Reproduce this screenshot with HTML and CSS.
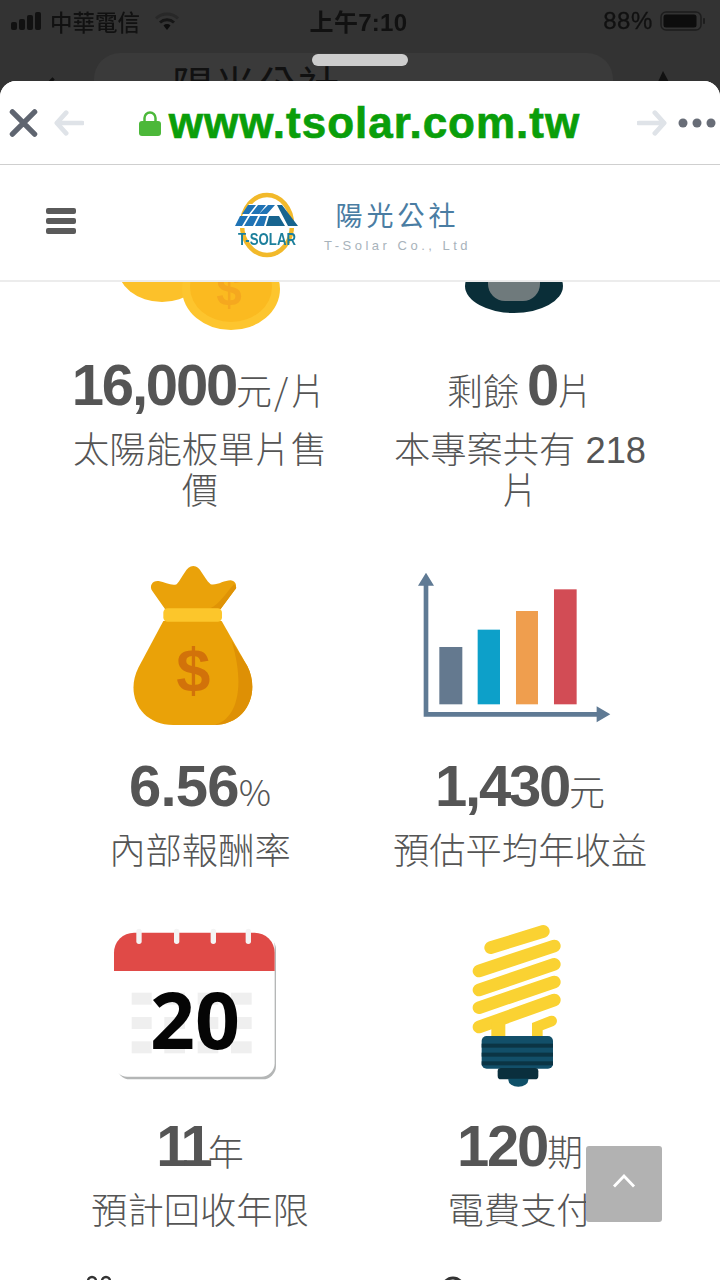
FILE: index.html
```html
<!DOCTYPE html>
<html lang="zh-Hant">
<head>
<meta charset="utf-8">
<title>陽光公社</title>
<link rel="stylesheet" href="styles.css">
</head>
<body>
<div class="phone">
  <header class="backdrop">
    <div class="status">
      <div class="status-left">
        <svg class="signal" viewBox="0 0 30 18"><rect x="0" y="10" width="6" height="8" rx="2"/><rect x="8" y="7" width="6" height="11" rx="2"/><rect x="16" y="3" width="6" height="15" rx="2"/><rect x="24" y="0" width="6" height="18" rx="2"/></svg>
        <span>中華電信</span>
        <svg class="wifi" viewBox="0 0 24 18"><path d="M1 6.500a16 16 0 0 1 22 0" fill="none" stroke="#282828" stroke-width="3"/><path d="M5 10.500a10.500 10.500 0 0 1 14 0" fill="none" stroke="#161616" stroke-width="3"/><path d="M8.500 13.500a5 5 0 0 1 7 0L12 18z" fill="#0d0d0d"/></svg>
      </div>
      <div class="status-time">上午7:10</div>
      <div class="status-right">
        <span>88%</span>
        <svg class="battery" viewBox="0 0 46 20"><rect x="1" y="1" width="40" height="18" rx="5" fill="none" stroke="#1d1d1d" stroke-width="1.500"/><rect x="3.500" y="3.500" width="33" height="13" rx="2.500" fill="#0d0d0d"/><rect x="43" y="7" width="2" height="6" rx="1" fill="#1d1d1d"/></svg>
      </div>
    </div>
    <div class="behind">
      <svg class="behind-arrow" viewBox="0 0 20 30"><path d="M17 3 5 15l12 12" fill="none" stroke="#111" stroke-width="4"/></svg>
      <div class="behind-pill"><span class="behind-lens"></span><span class="behind-title">陽光公社</span></div>
      <svg class="behind-share" viewBox="0 0 30 30"><path d="M2 30 14 4l14 26z" fill="#111"/></svg>
    </div>
  </header>
  <div class="handle"></div>

  <section class="sheet">
    <div class="addressbar">
      <div class="addr-side">
        <svg class="close" viewBox="0 0 30 30"><path d="M3.500 3.500l23 23M26.500 3.500l-23 23" stroke="#5f6570" stroke-width="5.500" stroke-linecap="round"/></svg>
        <svg class="arrow" viewBox="0 0 32 28"><path d="M13 3 3 14l10 11M3 14h27" fill="none" stroke="#dfe3e8" stroke-width="5" stroke-linecap="round" stroke-linejoin="round"/></svg>
      </div>
      <div class="url">
        <svg class="lock" viewBox="0 0 22 26"><path d="M5.500 12V8a5.500 5.500 0 0 1 11 0v4" fill="none" stroke="#4cb83a" stroke-width="2.500"/><rect y="11" width="22" height="15" rx="3" fill="#4cb83a"/></svg>
        <span>www.tsolar.com.tw</span>
      </div>
      <div class="addr-side addr-right">
        <svg class="arrow" viewBox="0 0 32 28"><path d="M19 3l10 11-10 11M29 14H2" fill="none" stroke="#dfe3e8" stroke-width="5" stroke-linecap="round" stroke-linejoin="round"/></svg>
        <svg class="dots" viewBox="0 0 38 10"><circle cx="5" cy="5" r="4.500" fill="#686d77"/><circle cx="19" cy="5" r="4.500" fill="#686d77"/><circle cx="33" cy="5" r="4.500" fill="#686d77"/></svg>
      </div>
    </div>

    <nav class="sitenav">
      <div class="burger"><i></i><i></i><i></i></div>
      <div class="logo">
        <svg class="logo-mark" viewBox="0 0 66 66">
          <ellipse cx="33" cy="33" rx="25" ry="30" fill="none" stroke="#f2b92a" stroke-width="4.500"/>
          <path d="M15 12h32l17 24H1z" fill="#fff"/>
          <path d="M14 13h8l-7 9H8zM24 13h8l-7 9h-8zM34 13h7l-8 9h-8zM6 24h8l-6 10H1zM16 24h8l-5 10h-9zM26 24h7l-3 10h-9z" fill="#1f73b5"/>
          <path d="M43 13h5l16 21H54z M35 24h10l6 10H32z" fill="#17648f"/>
          <text class="logo-mark-text" x="33" y="53" text-anchor="middle" textLength="58" lengthAdjust="spacingAndGlyphs">T-SOLAR</text>
        </svg>
        <div class="logo-text">
          <div class="logo-zh">陽光公社</div>
          <div class="logo-en">T-Solar Co., Ltd</div>
        </div>
      </div>
    </nav>

    <main class="viewport">
      <div class="stats">
        <article class="stat">
          <svg class="stat-icon" viewBox="0 0 320 190">
            <ellipse cx="122" cy="106" rx="45" ry="36" fill="#fcc12a"/>
            <ellipse cx="191" cy="129" rx="49" ry="41" fill="#fdc52e"/>
            <ellipse cx="191" cy="127" rx="41" ry="35" fill="#fbba20"/>
            <text class="coin-sign" x="189" y="146" text-anchor="middle">$</text>
          </svg>
          <div class="value"><b>16,000</b><span class="wide">元/片</span></div>
          <div class="label">太陽能板單片售價</div>
        </article>
        <article class="stat">
          <svg class="stat-icon" viewBox="0 0 320 190">
            <ellipse cx="154" cy="126" rx="49" ry="27" fill="#0a2e38"/>
            <rect x="128" y="100" width="52" height="41" rx="17" fill="#6f7a7c"/>
          </svg>
          <div class="value"><span>剩餘 </span><b>0</b><span>片</span></div>
          <div class="label">本專案共有 218片</div>
        </article>
        <article class="stat">
          <svg class="stat-icon" viewBox="0 0 320 190">
            <g transform="translate(60 -10) scale(.3333)">
              <path d="M280 45C302 45 308 78 332 100 352 104 372 88 392 88 408 90 414 106 402 120L362 174H195L157 120C146 104 158 88 176 90 196 93 214 106 230 100 250 78 258 45 280 45Z" fill="#eaa20a"/>
              <path d="M330 172C360 160 378 125 402 100 412 110 410 112 402 120L362 174Z" fill="#df9306"/>
              <path d="M190 210H365L442 345C482 425 440 522 340 522H220C120 522 75 430 115 350Z" fill="#eaa208"/>
              <path d="M395 270 442 345C482 425 440 522 340 522 405 510 440 420 395 270Z" fill="#de9005"/>
              <rect x="190" y="172" width="176" height="40" rx="13" fill="#fcc62b"/>
              <text class="bag-sign" x="280" y="419" text-anchor="middle">$</text>
            </g>
          </svg>
          <div class="value"><b class="loose">6.56</b><span>%</span></div>
          <div class="label">內部報酬率</div>
        </article>
        <article class="stat">
          <svg class="stat-icon" viewBox="0 0 320 190">
            <g transform="translate(40 0) scale(.3333)">
              <path d="M78 60V460H600" fill="none" stroke="#5f7a94" stroke-width="14"/>
              <path d="M78 35 102 74H54zM631 460 590 436V484z" fill="#5f7a94"/>
              <rect x="118" y="258" width="69" height="172" fill="#64798f"/>
              <rect x="233" y="206" width="67" height="224" fill="#0da0c9"/>
              <rect x="348" y="150" width="66" height="280" fill="#ef9e4e"/>
              <rect x="462" y="85" width="68" height="345" fill="#d24c55"/>
            </g>
          </svg>
          <div class="value"><b>1,430</b><span>元</span></div>
          <div class="label">預估平均年收益</div>
        </article>
        <article class="stat">
          <svg class="stat-icon" viewBox="0 0 320 190">
            <g transform="translate(60 -5) scale(.3333)">
              <rect x="50" y="60" width="478" height="430" rx="40" fill="#b4b6b6"/>
              <rect x="42" y="50" width="482" height="432" rx="40" fill="#fff"/>
              <path d="M42 165V110a60 60 0 0 1 60-60H464a60 60 0 0 1 60 60V165Z" fill="#e04a47"/>
              <g fill="#f4f4f4"><rect x="109" y="38" width="16" height="46" rx="8"/><rect x="222" y="38" width="16" height="46" rx="8"/><rect x="332" y="38" width="16" height="46" rx="8"/><rect x="437" y="38" width="16" height="46" rx="8"/></g>
              <g fill="#efefef"><rect x="95" y="230" width="360" height="36"/><rect x="95" y="303" width="360" height="36"/><rect x="95" y="376" width="360" height="36"/></g>
              <g fill="#fff"><rect x="155" y="225" width="38" height="190"/><rect x="255" y="225" width="38" height="190"/><rect x="355" y="225" width="38" height="190"/></g>
              <text class="cal-num" x="285" y="398" text-anchor="middle">20</text>
            </g>
          </svg>
          <div class="value"><b class="tight">11</b><span>年</span></div>
          <div class="label">預計回收年限</div>
        </article>
        <article class="stat">
          <svg class="stat-icon" viewBox="0 0 320 190">
            <g transform="translate(90 -5) scale(.3333)">
              <g fill="none" stroke="#fad232" stroke-width="38" stroke-linecap="round">
                <path d="M122 95 280 46M87 165 313 90M87 222 313 145M87 275 313 198M87 333 313 252"/>
                <path d="M262 360V332L305 315" stroke-width="32"/>
              </g>
              <rect x="124" y="320" width="42" height="50" fill="#fad232"/>
              <rect x="95" y="360" width="214" height="98" rx="15" fill="#124f69"/>
              <g fill="#0b3444"><rect x="95" y="383" width="214" height="12"/><rect x="95" y="410" width="214" height="12"/><rect x="95" y="436" width="214" height="12"/></g>
              <rect x="143" y="456" width="122" height="34" rx="10" fill="#0a2f3d"/>
              <path d="M175 488H235V492A30 20 0 0 1 175 492Z" fill="#0f5068"/>
            </g>
          </svg>
          <div class="value"><b>120</b><span>期</span></div>
          <div class="label">電費支付</div>
        </article>
        <article class="stat">
          <svg class="stat-icon stat-peek" viewBox="0 0 320 190">
            <circle cx="52" cy="5" r="4" fill="none" stroke="#333" stroke-width="2.500"/>
            <circle cx="66" cy="5" r="4" fill="none" stroke="#333" stroke-width="2.500"/>
          </svg>
        </article>
        <article class="stat">
          <svg class="stat-icon stat-peek" viewBox="0 0 320 190">
            <circle cx="93" cy="12" r="10" fill="none" stroke="#333" stroke-width="3"/>
          </svg>
        </article>
      </div>
    </main>
  </section>

  <button class="totop" type="button" aria-label="top">
    <svg viewBox="0 0 24 14"><path d="M2 12.500 12 2l10 10.500" fill="none" stroke="#fff" stroke-width="2.800"/></svg>
  </button>
</div>
</body>
</html>
```
FILE: styles.css
```css
* { box-sizing: border-box; }
html, body { margin: 0; padding: 0; background: #fff; }
body { font-family: "Liberation Sans", "Noto Sans CJK TC", sans-serif; }
.phone { position: relative; width: 720px; height: 1280px; overflow: hidden; background: #333; }

.backdrop { height: 81px; overflow: hidden; color: #111; }
.status { height: 41px; padding: 0 14px 0 11px; display: grid; grid-template-columns: 1fr auto 1fr; align-items: center; font-size: 23px; filter: blur(.4px); }
.status-left { display: flex; align-items: center; gap: 9px; }
.status-left span { font-family: "Noto Sans CJK TC", sans-serif; font-size: 22.5px; font-weight: 500; }
.signal { width: 30px; height: 18px; fill: #111; }
.wifi { width: 24px; height: 18px; margin-left: 6px; }
.status-time { font-family: "Liberation Sans", "Noto Sans CJK TC", sans-serif; font-size: 24px; font-weight: 700; letter-spacing: .3px; }
.status-right { display: flex; justify-content: flex-end; align-items: center; gap: 7px; }
.status-right span { font-size: 24px; letter-spacing: .6px; -webkit-text-stroke: .3px #111; }
.battery { width: 46px; height: 20px; }

.behind { height: 50px; margin-top: 12px; padding: 0 40px; display: flex; align-items: flex-start; gap: 38px; }
.behind-arrow { width: 16px; height: 30px; margin-top: 20px; flex: none; }
.behind-pill { width: 519px; height: 60px; flex: none; background: #3a3a3a; border-radius: 26px; padding: 6px 0 0 24px; display: flex; align-items: flex-start; gap: 32px; }
.behind-lens { width: 22px; height: 22px; border: 2px solid #666; border-radius: 50%; margin-top: 22px; }
.behind-title { font-family: "Noto Sans CJK TC", sans-serif; font-size: 42px; line-height: 50px; color: #111; }
.behind-share { width: 30px; height: 30px; margin: 14px 0 0 -2px; flex: none; }

.handle { position: absolute; left: 312px; top: 54px; width: 96px; height: 12px; border-radius: 6px; background: #cdcdcd; }

.sheet { height: 1199px; background: #fff; border-radius: 16px 16px 0 0; overflow: hidden; }

.addressbar { height: 84px; border-bottom: 1px solid #cfcfcf; display: flex; align-items: center; padding: 0 4px 0 9px; position: relative; z-index: 3; background: #fff; }
.addr-side { width: 127px; flex: none; display: flex; align-items: center; gap: 16px; }
.addr-right { width: 133px; justify-content: flex-end; gap: 11px; }
.close { width: 29px; height: 30px; }
.arrow { width: 30px; height: 28px; }
.dots { width: 38px; height: 10px; }
.url { flex: 1; display: flex; justify-content: center; align-items: center; gap: 8px; min-width: 0; }
.lock { width: 22px; height: 26px; flex: none; }
.url span { color: #0a9e0a; font-size: 44px; font-weight: 700; line-height: 60px; letter-spacing: 1px; white-space: nowrap; -webkit-text-stroke: .7px #0a9e0a; }

.sitenav { height: 117px; padding: 0 0 0 46px; display: flex; align-items: center; gap: 158px; background: #fff; border-bottom: 2px solid #ececec; position: relative; z-index: 2; }
.burger { width: 30px; display: flex; flex-direction: column; gap: 4px; margin-top: -4px; }
.burger i { display: block; height: 6px; border-radius: 2px; background: #5a5a5a; }
.logo { display: flex; align-items: center; gap: 24px; margin-top: 4px; }
.logo-mark { width: 66px; height: 66px; filter: blur(.5px); }
.logo-mark-text { font-family: "Liberation Sans", sans-serif; font-weight: 700; font-size: 17px; fill: #1c7f9c; }
.logo-text { text-align: center; margin-top: 4px; }
.logo-zh { font-family: "Noto Sans CJK TC", sans-serif; font-size: 27px; line-height: 34px; letter-spacing: 4px; color: #4a7da3; }
.logo-en { font-size: 13px; line-height: 20px; letter-spacing: 3.5px; color: #a8b3bb; white-space: nowrap; margin-top: 4px; }

.viewport { height: 998px; overflow: hidden; background: #fff; }
.stats { margin-top: -122px; padding: 0 40px; display: grid; grid-template-columns: 320px 320px; }
.stat { padding-bottom: 49px; text-align: center; color: #555; }
.stat-icon { display: block; width: 320px; height: 190px; filter: blur(.5px); overflow: visible; }
.stat-peek { margin-top: -5px; }
.value { height: 70px; line-height: 70px; white-space: nowrap; font-family: "Noto Sans CJK TC", sans-serif; font-size: 36px; font-weight: 300; }
.value b { font-family: "Liberation Sans", sans-serif; font-size: 58px; font-weight: 700; letter-spacing: -2.200px; }
.value b.loose { letter-spacing: -.8px; }
.value b.tight { letter-spacing: -5px; }
.value .wide { letter-spacing: 2px; }
.label { margin-top: 10px; padding: 0 30px; font-family: "Liberation Sans", "Noto Sans CJK TC", sans-serif; font-size: 36.3px; line-height: 41px; font-weight: 300; }

.coin-sign { font-family: "Liberation Sans", sans-serif; font-size: 46px; font-weight: 700; fill: #f5a81f; }
.bag-sign { font-family: "Liberation Sans", sans-serif; font-size: 184px; font-weight: 700; fill: #d2720a; }
.cal-num { font-family: "Open Sans", sans-serif; font-size: 236px; font-weight: 700; fill: #050505; }

.totop { position: absolute; left: 586px; top: 1146px; width: 76px; height: 76px; padding: 0; border: 0; border-radius: 3px; background: #b2b2b2; display: flex; align-items: center; justify-content: center; }
.totop svg { width: 24px; height: 14px; margin-top: -6px; }
```
